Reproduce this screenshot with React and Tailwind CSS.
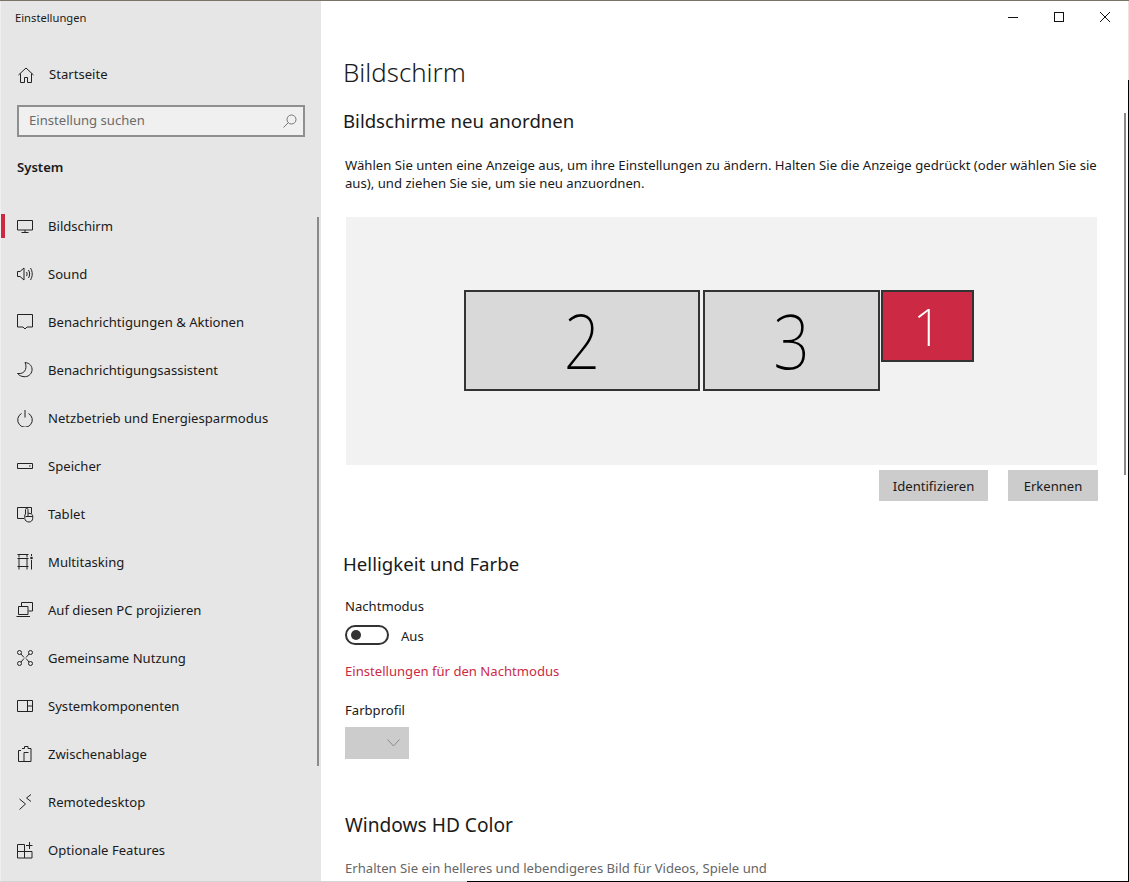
const ic = { width: 18, height: 18, viewBox: '0 0 18 18', fill: 'none', stroke: '#222', strokeWidth: 1 };

const icons = {
  monitor: <svg {...ic}><path d="M1.500 3.500h15v9.500h-15zM9 13v2.500M5.500 15.500h7" /></svg>,
  sound: <svg {...ic}><path d="M1.500 6.500h2.500l4-3.500v12l-4-3.500h-2.500zM10.500 7c.8 1.200.8 2.800 0 4M12.500 5c1.500 2.400 1.500 5.600 0 8M14.500 3c2.300 3.600 2.300 8.400 0 12" /></svg>,
  note: <svg {...ic}><path d="M1.500 1.500h15v12.500h-5.500l-2 2-2-2h-5.500z" /></svg>,
  moon: <svg {...ic}><path d="M9 1.500c5 .5 7.500 4 7 8-.6 4-4 6.500-8 6.200-3-.2-5-1.500-6.500-3.200 4 .5 7-1 8-4 .8-2.400.5-5-.5-7z" /></svg>,
  power: <svg {...ic}><path d="M5.500 4.500a7.300 7.300 0 1 0 7 0M9 1v7.500" /></svg>,
  storage: <svg {...ic}><path d="M1.500 6.500h15v5h-15zM13 9h1.500" /></svg>,
  tablet: <svg {...ic}><path d="M8 13.500h-6.500v-11h14v6M9.500 9V4.500c0-1.400 2.500-1.400 2.500 0V8l3 .8c1.200.4 1.700 1.200 1.700 2.200v2.500c0 2-1.700 3.500-3.700 3.500s-4.200-1.300-4.200-3.500V10zM12 8v3.500M9.500 11.500h7" /></svg>,
  multi: <svg {...ic}><path d="M1.500 1.500h11M3 1.500v3M11 1.500v3M1.500 5.500h11M3 5.500v8M11 5.500v8M1.500 13.500h11M3 13.500v3M11 13.500v3M15.500 7v9.500M15.500 1v2" /><circle cx="15.500" cy="5" r="1.300" fill="#222" stroke="none" /></svg>,
  project: <svg {...ic}><path d="M5.500 5V1.500h11v8.500h-4M2.500 5.500h9.500v8h-9.500zM.5 15.500h13.500" /></svg>,
  share: <svg {...ic}><circle cx="3.500" cy="3.500" r="2" /><circle cx="14.500" cy="3.500" r="2" /><circle cx="3.500" cy="14.500" r="2" /><circle cx="14.500" cy="14.500" r="2" /><path d="M5 5l3 3.500M13 5l-3 3.500M5 13l3-3.500M13 13l-3-3.500" /></svg>,
  comps: <svg {...ic}><path d="M1.500 3.500h15v11h-15zM11.500 3.500v11M11.500 9h5" /></svg>,
  clip: <svg {...ic}><path d="M5 5.500h-2.500v11h5.500M6 3.500h2.500v-2h3.500v2h3v13h-7v-9h4.500" /></svg>,
  remote: <svg {...ic}><path d="M3.500 6l6 5-6 5.500M15 1.500l-4.500 3.500 4.500 3.500" /></svg>,
  features: <svg {...ic}><path d="M1.500 3.500h7v7h-7zM1.500 10.500h7v6.500h-7zM8.500 10.500h7.500v6.500h-7.500zM10 4.500h6.500M13.500 1v7" /></svg>,
};

const items = [
  ['monitor', 'Bildschirm'],
  ['sound', 'Sound'],
  ['note', 'Benachrichtigungen & Aktionen'],
  ['moon', 'Benachrichtigungsassistent'],
  ['power', 'Netzbetrieb und Energiesparmodus'],
  ['storage', 'Speicher'],
  ['tablet', 'Tablet'],
  ['multi', 'Multitasking'],
  ['project', 'Auf diesen PC projizieren'],
  ['share', 'Gemeinsame Nutzung'],
  ['comps', 'Systemkomponenten'],
  ['clip', 'Zwischenablage'],
  ['remote', 'Remotedesktop'],
  ['features', 'Optionale Features'],
];

function Sidebar() {
  return (
    <aside className="relative w-[321px] shrink-0 bg-[#e6e6e6] text-[13.100px] text-[#1a1a1a]">
      <div className="absolute left-0 top-0 bottom-0 w-[1px] bg-[#f0f0f0]" />
      <div className="pl-[15px] pt-[9px] h-[50px] text-[11.200px] leading-4">Einstellungen</div>
      <div className="flex items-center h-[47px] pl-[18px]">
        <svg width="16" height="16" viewBox="0 0 16 16" fill="none" stroke="#222" strokeWidth="1">
          <path d="M.5 8L8 1l7.500 7M2.500 6.500v9h4v-5h3v5h4v-9" />
        </svg>
        <span className="ml-[15px]">Startseite</span>
      </div>
      <div className="ml-[17px] mr-[16px] mt-[7px] h-[32px] border-2 border-[#8f8f8f] bg-[#f0f0f0] flex items-center justify-between pl-[10px] pr-[6px] text-[#6b6b6b]">
        <span>Einstellung suchen</span>
        <svg width="14" height="14" viewBox="0 0 14 14" fill="none" stroke="#777" strokeWidth="1">
          <circle cx="8.500" cy="5.500" r="4.500" />
          <path d="M5.300 8.700L.5 13.500" />
        </svg>
      </div>
      <div className="pl-[17px] mt-[20px] h-[46px] font-semibold leading-5">System</div>
      <nav>
        {items.map(([icon, label], i) => (
          <div key={label} className="relative flex items-center h-[48px] pl-[16px]">
            {i === 0 && <div className="absolute left-[1px] top-[11px] w-[4px] h-[24px] bg-[#cc2a44]" />}
            <span className="mb-[2px]">{icons[icon]}</span>
            <span className="ml-[14px]">{label}</span>
          </div>
        ))}
      </nav>
      <div className="absolute right-[2px] top-[216px] w-[2px] h-[549px] bg-[#8a8a8a]" />
    </aside>
  );
}

function Display({ n, className, num }) {
  return (
    <div className={`border-2 border-[#333] flex items-center justify-center ${className}`}>
      <span className={`font-extralight leading-none ${num}`}>{n}</span>
    </div>
  );
}

function WindowButtons() {
  return (
    <div className="flex justify-end h-[36px] pb-[4px] mr-[1px]">
      <div className="w-[46px] flex items-center justify-center">
        <svg width="10" height="10" viewBox="0 0 10 10" stroke="#111" strokeWidth="1" shapeRendering="crispEdges"><path d="M0 5.500h10" /></svg>
      </div>
      <div className="w-[46px] flex items-center justify-center">
        <svg width="10" height="10" viewBox="0 0 10 10" fill="none" stroke="#111" strokeWidth="1" shapeRendering="crispEdges"><path d="M.5 .5h9v9h-9z" /></svg>
      </div>
      <div className="w-[46px] flex items-center justify-center">
        <svg width="10" height="10" viewBox="0 0 10 10" stroke="#111" strokeWidth="1"><path d="M0 0l10 10M10 0L0 10" /></svg>
      </div>
    </div>
  );
}

function Main() {
  return (
    <main className="relative flex-1 bg-white text-[13.100px] text-[#1a1a1a] overflow-hidden">
      <WindowButtons />
      <div className="pl-[22px] pr-[31px]">
        <h1 className="text-[25.800px] leading-9 font-light h-[36px] mt-[17px]">Bildschirm</h1>
        <h2 className="text-[18.600px] leading-7 mt-[17px]">Bildschirme neu anordnen</h2>
        <p className="pl-[2px] mt-[21px] leading-[18px] text-[13.150px]">
          Wählen Sie unten eine Anzeige aus, um ihre Einstellungen zu ändern. Halten Sie die Anzeige gedrückt (oder wählen Sie sie aus), und ziehen Sie sie, um sie neu anzuordnen.
        </p>
        <div className="ml-[3px] mr-[1px] mt-[25px] h-[248px] bg-[#f2f2f2] flex items-start pl-[118px] pt-[73px]">
          <Display n="2" className="w-[236px] h-[101px] mr-[3px] bg-[#d9d9d9] text-black" num="text-[64px] scale-y-[1.18]" />
          <Display n="3" className="w-[177px] h-[101px] mr-[1px] bg-[#d9d9d9] text-black" num="text-[64px] scale-y-[1.18]" />
          <Display n="1" className="w-[93px] h-[72px] bg-[#cc2a44] text-white" num="text-[52px]" />
        </div>
        <div className="flex justify-end gap-[20px] mt-[5px]">
          <div className="w-[109px] h-[31px] pt-[3px] bg-[#cccccc] flex items-center justify-center">Identifizieren</div>
          <div className="w-[90px] h-[31px] pt-[3px] bg-[#cccccc] flex items-center justify-center">Erkennen</div>
        </div>
        <h2 className="text-[18.650px] leading-7 mt-[49px]">Helligkeit und Farbe</h2>
        <div className="pl-[2px]">
          <div className="mt-[18px] leading-5">Nachtmodus</div>
          <div className="flex items-center mt-[9px] h-[20px]">
            <div className="w-[44px] h-[20px] rounded-full border-2 border-[#333] flex items-center pl-[4px]">
              <div className="w-[10px] h-[10px] rounded-full bg-[#333]" />
            </div>
            <span className="ml-[12px] pt-[3px]">Aus</span>
          </div>
          <div className="mt-[16px] leading-5 text-[#cc2a44]">Einstellungen für den Nachtmodus</div>
          <div className="mt-[19px] leading-5">Farbprofil</div>
          <div className="mt-[7px] w-[64px] h-[32px] bg-[#cccccc] flex items-center justify-end pr-[9px]">
            <svg width="13" height="8" viewBox="0 0 13 8" fill="none" stroke="#8a8a8a" strokeWidth="1"><path d="M.5 .5l6 6.500 6-6.500" /></svg>
          </div>
          <h2 className="text-[19.150px] leading-7 mt-[52px]">Windows HD Color</h2>
          <p className="mt-[19px] leading-5 text-[#666]">Erhalten Sie ein helleres und lebendigeres Bild für Videos, Spiele und</p>
        </div>
      </div>
      <div className="absolute right-[3px] top-[112px] w-[2px] h-[362px] bg-[#8a8a8a]" />
      <div className="absolute right-0 top-0 w-[1px] h-[79px] bg-[#f8dde0]" />
      <div className="absolute right-0 top-[79px] bottom-0 w-[1px] bg-black" />
    </main>
  );
}

export default function App() {
  return (
    <div className="h-[882px] w-[1129px] overflow-hidden bg-white font-['Noto_Sans','Open_Sans',sans-serif]">
      <div className="flex h-[881px] border-t border-[#7a7468]">
        <Sidebar />
        <Main />
      </div>
      <div className="flex h-[1px]">
        <div className="w-[467px] bg-[#d4d4d4]" />
        <div className="flex-1 bg-black" />
      </div>
    </div>
  );
}
